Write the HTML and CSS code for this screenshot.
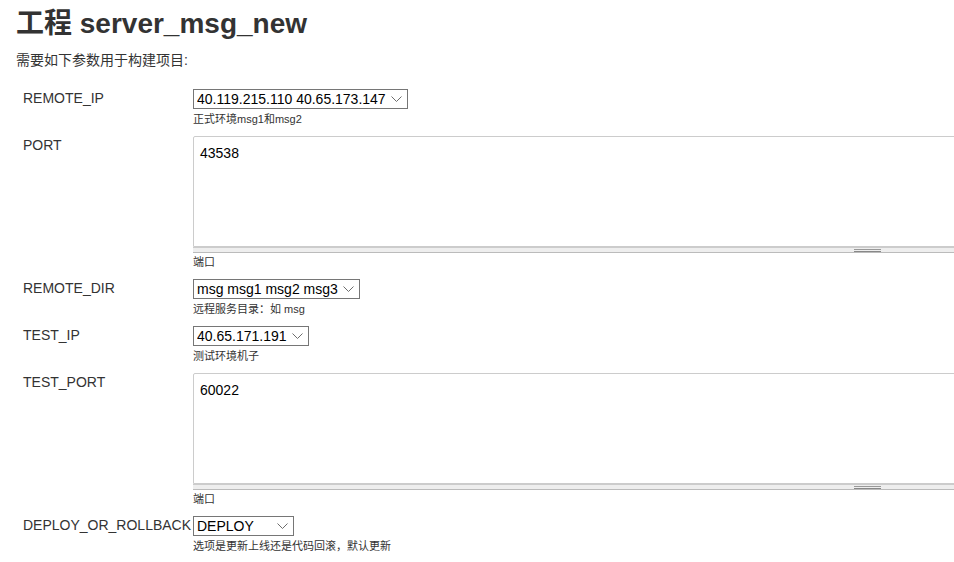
FILE: index.html
```html
<!DOCTYPE html>
<html lang="zh">
<head>
<meta charset="utf-8">
<title>工程 server_msg_new</title>
<link rel="stylesheet" href="styles.css">
</head>
<body>
<div class="page">
  <h1 class="title">工程 server_msg_new</h1>
  <p class="intro">需要如下参数用于构建项目:</p>
  <form class="params">
    <div class="label">REMOTE_IP</div>
    <div class="field">
      <div class="select-wrap">
        <select class="select"><option>40.119.215.110 40.65.173.147</option></select>
        <svg class="chevron" width="11" height="6" viewBox="0 0 11 6"><path d="M0.5 0.5 L5.5 5.5 L10.5 0.5" fill="none" stroke="#6d6d6d" stroke-width="1"/></svg>
      </div>
      <div class="desc">正式环境msg1和msg2</div>
    </div>

    <div class="label">PORT</div>
    <div class="field">
      <textarea class="textarea">43538</textarea>
      <div class="handle"></div>
      <div class="desc desc-tight">端口</div>
    </div>

    <div class="label">REMOTE_DIR</div>
    <div class="field">
      <div class="select-wrap">
        <select class="select"><option>msg msg1 msg2 msg3</option></select>
        <svg class="chevron" width="11" height="6" viewBox="0 0 11 6"><path d="M0.5 0.5 L5.5 5.5 L10.5 0.5" fill="none" stroke="#6d6d6d" stroke-width="1"/></svg>
      </div>
      <div class="desc">远程服务目录：如 msg</div>
    </div>

    <div class="label">TEST_IP</div>
    <div class="field">
      <div class="select-wrap">
        <select class="select"><option>40.65.171.191</option></select>
        <svg class="chevron" width="11" height="6" viewBox="0 0 11 6"><path d="M0.5 0.5 L5.5 5.5 L10.5 0.5" fill="none" stroke="#6d6d6d" stroke-width="1"/></svg>
      </div>
      <div class="desc">测试环境机子</div>
    </div>

    <div class="label">TEST_PORT</div>
    <div class="field">
      <textarea class="textarea">60022</textarea>
      <div class="handle"></div>
      <div class="desc desc-tight">端口</div>
    </div>

    <div class="label">DEPLOY_OR_ROLLBACK</div>
    <div class="field">
      <div class="select-wrap">
        <select class="select"><option>DEPLOY</option><option>ROLLBACK</option></select>
        <svg class="chevron" width="11" height="6" viewBox="0 0 11 6"><path d="M0.5 0.5 L5.5 5.5 L10.5 0.5" fill="none" stroke="#6d6d6d" stroke-width="1"/></svg>
      </div>
      <div class="desc">选项是更新上线还是代码回滚，默认更新</div>
    </div>
  </form>
</div>
</body>
</html>
```

FILE: styles.css
```css
html, body {
  margin: 0;
  padding: 0;
  background: #fff;
  overflow: hidden;
}

body {
  font-family: "Liberation Sans", Arial, "Noto Sans CJK SC", sans-serif;
  color: #333;
}

.page {
  padding: 8px 0 0 16px;
}

.title {
  margin: 0;
  font-size: 28px;
  line-height: 32px;
  font-weight: bold;
  color: #333;
}

.intro {
  margin: 12px 0 0;
  font-size: 14px;
  line-height: 16px;
}

.params {
  margin: 21px 0 0 7px;
  display: grid;
  grid-template-columns: 170px 949px;
  row-gap: 10px;
  align-items: start;
}

.label {
  font-size: 14px;
  line-height: 16px;
  padding-top: 1px;
  white-space: nowrap;
}

.field {
  display: flex;
  flex-direction: column;
  align-items: flex-start;
}

.select-wrap {
  position: relative;
  display: inline-flex;
}

.select {
  -webkit-appearance: none;
  appearance: none;
  box-sizing: border-box;
  font-family: "Liberation Sans", Arial, sans-serif;
  font-size: 14px;
  line-height: 16px;
  height: 20px;
  margin: 0;
  padding: 0 21px 0 3px;
  color: #000;
  background-color: #fff;
  border: 1px solid #767676;
  border-radius: 0;
}

.chevron {
  position: absolute;
  right: 6px;
  top: 7px;
  pointer-events: none;
}

.desc {
  margin-top: 3px;
  font-size: 11px;
  line-height: 14px;
  color: #333;
}

.desc-tight {
  margin-top: 2px;
}

.textarea {
  display: block;
  box-sizing: border-box;
  width: 949px;
  height: 111px;
  margin: 0;
  padding: 8px 6px;
  border: 1px solid #ccc;
  border-radius: 2px 2px 0 0;
  font-family: "Liberation Sans", Arial, sans-serif;
  font-size: 14px;
  line-height: 16px;
  color: #000;
  resize: none;
  overflow: hidden;
}

.handle {
  position: relative;
  box-sizing: border-box;
  width: 949px;
  height: 6px;
  background: #eee;
  border-top: 1px solid #ccc;
  border-bottom: 1px solid #bbb;
}

.handle::after {
  content: "";
  position: absolute;
  left: 661px;
  top: 1px;
  width: 27px;
  height: 1px;
  border-top: 1px solid #999;
  border-bottom: 1px solid #888;
}
```
